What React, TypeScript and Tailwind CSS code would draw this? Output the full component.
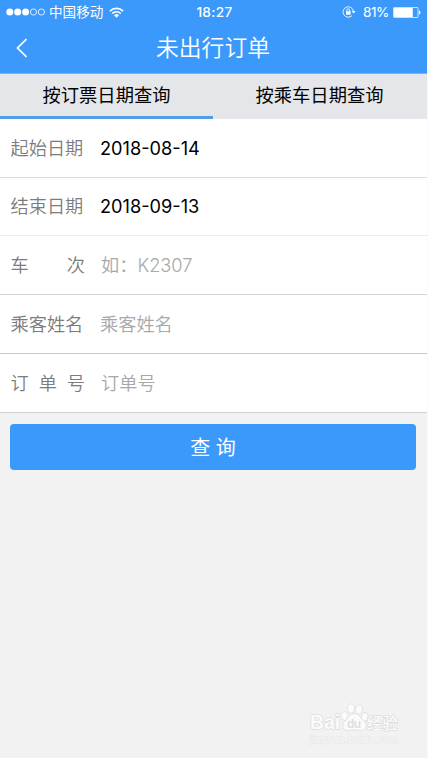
import React, { useState } from "react";

type Field = {
  label: string[];
  value?: string;
  placeholder?: string;
  indent: string;
  row: string;
};

const FIELDS: Field[] = [
  {
    label: ["起始日期"],
    value: "2018-08-14",
    indent: "pl-[15px]",
    row: "h-[59px] border-[#dcdcdf]",
  },
  {
    label: ["结束日期"],
    value: "2018-09-13",
    indent: "pl-[15px]",
    row: "h-[58px] border-[#ececec]",
  },
  {
    label: ["车", "次"],
    placeholder: "如：K2307",
    indent: "pl-[16px]",
    row: "h-[59px] border-[#d5d5d7]",
  },
  {
    label: ["乘客姓名"],
    placeholder: "乘客姓名",
    indent: "pl-[15px]",
    row: "h-[59px] border-[#c8c8ca]",
  },
  {
    label: ["订", "单", "号"],
    placeholder: "订单号",
    indent: "pl-[16px]",
    row: "h-[59px] border-[#cfcfd1]",
  },
];

const TABS = ["按订票日期查询", "按乘车日期查询"];

function SignalDots() {
  return (
    <svg className="h-[8px] w-[40px]" viewBox="0 0 40 8">
      <circle cx="3.8" cy="4" r="3.5" fill="#fff" />
      <circle cx="11.7" cy="4" r="3.5" fill="#fff" />
      <circle cx="19.6" cy="4" r="3.5" fill="#fff" />
      <circle cx="27.5" cy="4" r="3.1" fill="none" stroke="#fff" strokeWidth="0.8" />
      <circle cx="35.4" cy="4" r="3.1" fill="none" stroke="#fff" strokeWidth="0.8" />
    </svg>
  );
}

function WifiIcon() {
  return (
    <svg className="h-[11px] w-[15px]" viewBox="0 0 15 11" fill="none" stroke="#fff">
      <path d="M0.9 4.1a9.4 9.4 0 0 1 13.2 0" strokeWidth="1.7" />
      <path d="M3.2 6.5a6.1 6.1 0 0 1 8.6 0" strokeWidth="1.7" />
      <path d="M7.5 10.8L5 8.3a3.5 3.5 0 0 1 5 0z" fill="#fff" stroke="none" />
    </svg>
  );
}

function RotationLockIcon() {
  return (
    <svg className="h-[12px] w-[14px]" viewBox="0 0 14 12" fill="none" stroke="#fff">
      <path d="M11.4 5.2A5.2 5.2 0 1 0 9.9 9.7" strokeWidth="0.9" />
      <path d="M9.6 5h3.9l-1.9 2.4z" fill="#fff" stroke="none" />
      <rect x="4" y="5.2" width="4.6" height="3.5" fill="#fff" stroke="none" />
      <path d="M4.9 5.4V4.2a1.4 1.4 0 0 1 2.8 0v1.2" strokeWidth="0.9" />
    </svg>
  );
}

function BatteryIcon() {
  return (
    <svg className="h-[11px] w-[28px]" viewBox="0 0 28 11">
      <rect x="0.4" y="0.4" width="24.6" height="10.2" rx="1" fill="none" stroke="#fff" strokeWidth="0.8" />
      <rect x="1" y="1" width="18.8" height="9" fill="#fff" />
      <path d="M26 3.6q1.5 0.5 1.5 1.9t-1.5 1.9z" fill="#fff" />
    </svg>
  );
}

function StatusBar() {
  return (
    <div className="grid h-[24px] grid-cols-[1fr_auto_1fr] items-center pl-[6px] pr-[6px] leading-none">
      <div className="flex items-center">
        <SignalDots />
        <span className="ml-[3px] pt-px text-[13.6px]">中国移动</span>
        <span className="ml-[6px]">
          <WifiIcon />
        </span>
      </div>
      <span className="pl-[2px] pt-px text-[13.7px] font-medium tracking-[0.3px]">18:27</span>
      <div className="flex items-center justify-end">
        <RotationLockIcon />
        <span className="ml-[7px] mr-[4px] pt-px text-[13.6px] tracking-[-0.4px]">81%</span>
        <BatteryIcon />
      </div>
    </div>
  );
}

// Faint watermark in the lower right corner
function Watermark() {
  return (
    <div className="absolute bottom-[7px] right-[22px]">
      <svg className="h-[48px] w-[96px]" viewBox="0 0 96 48">
        <g fill="#fbfbfb" stroke="#dcdcdc" strokeWidth="1.4" paintOrder="stroke" strokeLinejoin="round">
          <text x="1" y="26" fontSize="20" fontWeight="700" fontFamily="Liberation Sans, sans-serif" textLength="30" lengthAdjust="spacingAndGlyphs">
            Bai
          </text>
          <ellipse cx="35.6" cy="13" rx="3" ry="4" transform="rotate(-15 35.6 13)" />
          <ellipse cx="42" cy="5.5" rx="3.1" ry="4.2" />
          <ellipse cx="50" cy="6.5" rx="3" ry="4.2" transform="rotate(12 50 6.5)" />
          <ellipse cx="55.5" cy="14" rx="2.9" ry="4" transform="rotate(20 55.5 14)" />
          <path d="M45 11c-3.500 0-4.500 3-7.500 6c-5 4-4 10 1 10c3 0 4-0.500 7-0.500s4 0.500 7 0.500c5 0 6-6 1-10c-3-3-4-6-8.500-6z" />
          <text x="58" y="25.5" fontSize="15.500" fontWeight="500" fontFamily="Noto Sans CJK SC, sans-serif" textLength="31">
            经验
          </text>
        </g>
        <text x="38" y="24.5" fontSize="12" fontWeight="700" fill="#dedede" fontFamily="Liberation Sans, sans-serif" textLength="14">
          du
        </text>
        <text
          x="1"
          y="39.5"
          fontSize="10"
          fill="#f8f8f8"
          stroke="#e6e6e6"
          strokeWidth="1"
          paintOrder="stroke"
          fontFamily="Liberation Sans, sans-serif"
          textLength="88"
        >
          jingyan.baidu.com
        </text>
      </svg>
    </div>
  );
}

export default function App() {
  const [activeTab, setActiveTab] = useState(0);

  return (
    <div className="relative flex h-[758px] w-[428px] flex-col overflow-hidden border-r border-[#f7f9fb] bg-[#f2f2f2] font-[Inter,'Noto_Sans_CJK_SC',sans-serif]">
      {/* Header */}
      <header className="h-[74px] border-b border-[#74b1f5] bg-[#3c99fc] text-white">
        <StatusBar />
        <div className="grid h-[49px] grid-cols-[48px_1fr_49px] items-center">
          <button className="pl-[16px] pb-[2px]">
            <svg className="h-[20px] w-[12px]" viewBox="0 0 12 20" fill="none" stroke="#fff" strokeWidth="1.7">
              <path d="M10.500 1.200L1.500 10l9 8.800" />
            </svg>
          </button>
          <h1 className="text-center text-[22.8px] font-[350] leading-none">未出行订单</h1>
        </div>
      </header>

      {/* Tabs */}
      <nav className="flex h-[45px] bg-[#e5e6ea]">
        {TABS.map((tab, i) => (
          <button
            key={tab}
            onClick={() => setActiveTab(i)}
            className={`w-[213px] border-b-[3px] pt-px text-[18.3px] leading-none text-black ${
              activeTab === i ? "border-[#4f9ee6]" : "border-transparent"
            }`}
          >
            {tab}
          </button>
        ))}
      </nav>

      {/* Search fields */}
      <form className="bg-white text-[18.2px] leading-none">
        {FIELDS.map((field) => (
          <div key={field.label.join("")} className={`flex items-center border-b pl-[10.5px] ${field.row}`}>
            <label className="flex w-[74.5px] justify-between font-[350] text-[#7c7c7c]">
              {field.label.map((part) => (
                <span key={part}>{part}</span>
              ))}
            </label>
            {field.value ? (
              <span className={`text-black ${field.indent}`}>{field.value}</span>
            ) : (
              <span className={`font-[350] text-[#a8a8a8] ${field.indent}`}>{field.placeholder}</span>
            )}
          </div>
        ))}
      </form>

      {/* Submit */}
      <button className="ml-[10px] mt-[11px] h-[46px] w-[406px] rounded-[4px] bg-[#3c99fc] pt-[2px] text-[20px] leading-none text-white">
        查 询
      </button>

      <Watermark />
    </div>
  );
}
